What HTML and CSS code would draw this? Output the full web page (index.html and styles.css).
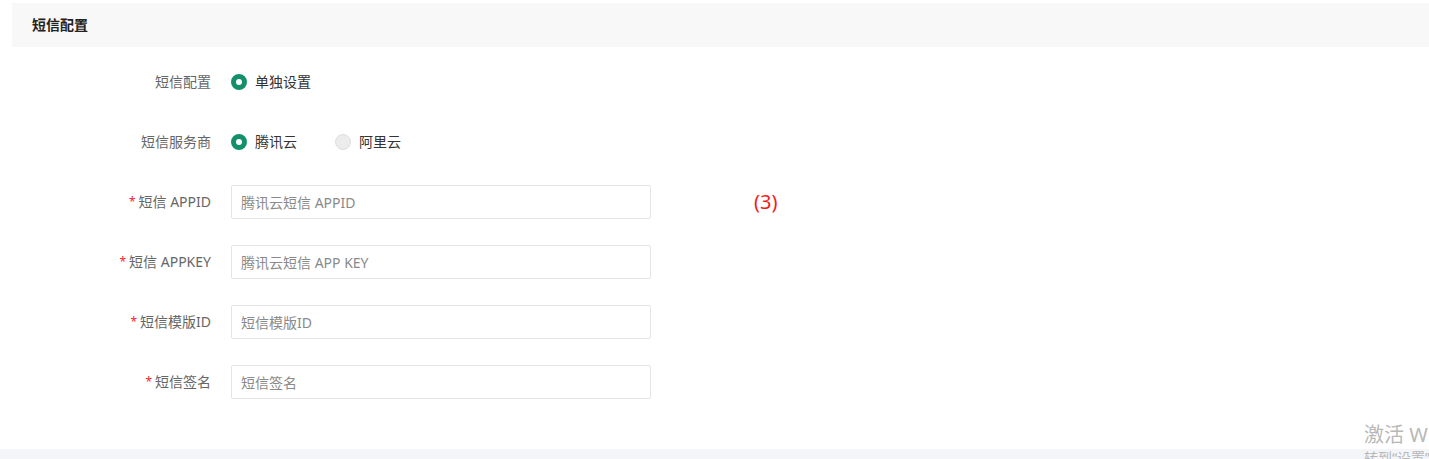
FILE: index.html
```html
<!DOCTYPE html>
<html lang="zh-CN">
<head>
    <meta charset="UTF-8">
    <meta name="viewport" content="width=device-width, initial-scale=1.0">
    <title>短信配置</title>
    <link rel="stylesheet" href="styles.css">
</head>
<body>
    <div class="page">
        <div class="panel">
            <div class="panel-title">短信配置</div>

            <!-- SMS settings form -->
            <form class="form">
                <div class="form-row">
                    <label class="form-label">短信配置</label>
                    <div class="form-field">
                        <label class="radio checked"><span class="radio-dot"></span>单独设置</label>
                    </div>
                </div>

                <div class="form-row">
                    <label class="form-label">短信服务商</label>
                    <div class="form-field">
                        <label class="radio checked"><span class="radio-dot"></span>腾讯云</label>
                        <label class="radio"><span class="radio-dot"></span>阿里云</label>
                    </div>
                </div>

                <div class="form-row">
                    <label class="form-label"><span class="required">*</span>短信 APPID</label>
                    <div class="form-field">
                        <input type="text" class="text-input" placeholder="腾讯云短信 APPID">
                        <span class="note">(3)</span>
                    </div>
                </div>

                <div class="form-row">
                    <label class="form-label"><span class="required">*</span>短信 APPKEY</label>
                    <div class="form-field">
                        <input type="text" class="text-input" placeholder="腾讯云短信 APP KEY">
                    </div>
                </div>

                <div class="form-row">
                    <label class="form-label"><span class="required">*</span>短信模版ID</label>
                    <div class="form-field">
                        <input type="text" class="text-input" placeholder="短信模版ID">
                    </div>
                </div>

                <div class="form-row">
                    <label class="form-label"><span class="required">*</span>短信签名</label>
                    <div class="form-field">
                        <input type="text" class="text-input" placeholder="短信签名">
                    </div>
                </div>
            </form>
        </div>
        <div class="footer-band"></div>
    </div>

    <!-- Windows activation watermark -->
    <div class="watermark">
        <div class="watermark-title">激活 Windows</div>
        <div class="watermark-sub">转到“设置”以激活 Windows。</div>
    </div>
</body>
</html>
```

FILE: styles.css
```css
html, body {
    margin: 0;
    padding: 0;
    height: 100%;
    overflow: hidden;
}

body {
    font-family: "Noto Sans", "Noto Sans CJK SC", sans-serif;
    font-size: 14px;
    color: #333;
    background-color: #fff;
}

.page {
    display: flex;
    flex-direction: column;
    min-height: 100%;
}

.panel {
    padding: 3px 0 0 12px;
    height: 449px;
    box-sizing: border-box;
}

.panel-title {
    height: 44px;
    line-height: 44px;
    padding-left: 20px;
    background-color: #f8f8f8;
    font-weight: bold;
    font-size: 14px;
    color: #222;
}

.form {
    padding-top: 5px;
}

.form-row {
    display: flex;
    align-items: center;
    height: 60px;
}

.form-label {
    width: 199px;
    text-align: right;
    color: #666;
    line-height: 20px;
}

.required {
    color: #f5222d;
    font-size: 12px;
    margin-right: 3px;
    vertical-align: 1px;
}

.form-field {
    display: flex;
    align-items: center;
    margin-left: 20px;
}

.radio {
    display: flex;
    align-items: center;
    color: #333;
    margin-right: 38px;
    line-height: 20px;
}

.radio-dot {
    width: 16px;
    height: 16px;
    border-radius: 50%;
    box-sizing: border-box;
    background-color: #ececec;
    border: 1px solid #dedede;
    margin-right: 8px;
}

.radio.checked .radio-dot {
    background-color: #fff;
    border: 5px solid #13906a;
}

.text-input {
    width: 420px;
    height: 34px;
    box-sizing: border-box;
    border: 1px solid #e4e4e4;
    border-radius: 2px;
    padding: 0 9px;
    font-family: inherit;
    font-size: 14px;
    color: #333;
    outline: none;
}

.text-input::placeholder {
    color: #8a8a8a;
}

.note {
    color: #f21c1c;
    font-size: 20px;
    margin-left: 103px;
    margin-top: -2px;
}

.footer-band {
    flex: 1;
    background-color: #f3f5f9;
}

.watermark {
    position: absolute;
    left: 1364px;
    top: 421px;
    color: #b8b8b8;
    white-space: nowrap;
}

.watermark-title {
    font-size: 20px;
    line-height: 28px;
}

.watermark-sub {
    font-size: 14px;
    line-height: 18px;
}
```
